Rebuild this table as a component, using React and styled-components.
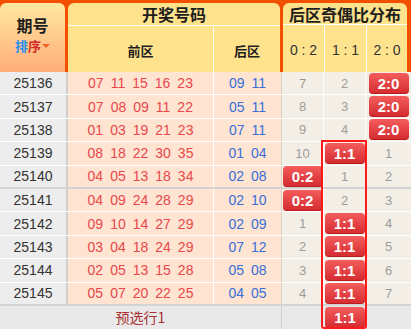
import React from 'react';
import styled, { createGlobalStyle } from 'styled-components';

const GlobalStyle = createGlobalStyle`
	body {
		margin: 0;
		background: #fff;
		font-family: 'Liberation Sans', Arial, sans-serif;
	}
`;

const CJK = `'Noto Sans CJK SC', 'Liberation Sans', sans-serif`;
const COLS = '68px 146px 68px 42px 42px 45px';

const Board = styled.div`
	width: 411px;
`;

const Head = styled.div`
	display: flex;
	gap: 3px;
	height: 72px;
	box-sizing: border-box;
	padding: 3px 4px 0 0;
	background: #f24f00;
`;

const HeadBlock = styled.div`
	width: ${(p) => p.$w}px;
	border-radius: 6px 6px 0 0;
	overflow: hidden;
	display: flex;
	flex-direction: column;
	background: #ffe28c;
`;

const PeriodHead = styled(HeadBlock)`
	background: linear-gradient(#ffe8a0, #ffad7a);
	align-items: center;
	justify-content: center;
	font-family: ${CJK};
	font-weight: 700;
	padding-bottom: 6px;
	box-sizing: border-box;
`;

const PeriodTitle = styled.div`
	font-size: 16px;
	line-height: 20px;
	color: #1e1e1e;
`;

const Sort = styled.div`
	display: flex;
	align-items: center;
	font-size: 13px;
	line-height: 17px;
	margin-top: 2px;
`;

const SortChar = styled.span`
	color: ${(p) => p.$color};
`;

const Caret = styled.span`
	margin-left: 1px;
	border-left: 4px solid transparent;
	border-right: 4px solid transparent;
	border-top: 4px solid #f2632a;
`;

const BlockTitle = styled.div`
	height: ${(p) => p.$h}px;
	border-bottom: 1px solid #fff;
	display: flex;
	align-items: center;
	justify-content: center;
	font-family: ${CJK};
	font-weight: 700;
	font-size: 16px;
	color: #1e1e1e;
`;

const SubRow = styled.div`
	flex: 1;
	display: flex;
`;

const SubCell = styled.div`
	width: ${(p) => (p.$w ? `${p.$w}px` : 'auto')};
	flex: ${(p) => (p.$w ? 'none' : 1)};
	border-right: ${(p) => (p.$last ? 'none' : '1px solid #fff')};
	display: flex;
	align-items: center;
	justify-content: center;
	font-family: ${(p) => (p.$mono ? `'Liberation Sans', Arial, sans-serif` : CJK)};
	font-weight: ${(p) => (p.$mono ? 400 : 700)};
	font-size: ${(p) => (p.$mono ? 14 : 13)}px;
	color: ${(p) => (p.$mono ? '#333' : '#1e1e1e')};
	padding-top: 2px;
`;

const Body = styled.div`
	position: relative;
`;

const Row = styled.div`
	display: grid;
	grid-template-columns: ${COLS};
	height: 23.4px;
	box-sizing: border-box;
	border-bottom: ${(p) => (p.$groupEnd ? '2px solid #d3d3d3' : '1px solid #fff')};
`;

const Cell = styled.div`
	display: flex;
	align-items: center;
	justify-content: center;
	min-width: 0;
	box-sizing: border-box;
`;

const PeriodCell = styled(Cell)`
	background: #ededed;
	border-right: 2px solid #cfcfcf;
	color: #333;
	font-size: 14px;
`;

const BallCell = styled(Cell)`
	gap: 7px;
	background: #fee4d1;
	border-right: 1px solid ${(p) => p.$edge};
	color: ${(p) => p.$color};
	font-size: 14px;
`;

const DistCell = styled(Cell)`
	background: ${(p) => p.$bg || '#f4efe6'};
	border-right: ${(p) => (p.$last || p.$bg ? 'none' : '1px solid #fff')};
	color: #9c9c9c;
	font-size: 13px;
`;

const Badge = styled.span`
	width: 40px;
	height: 21px;
	flex: none;
	border-radius: 4px;
	background: linear-gradient(#f45d5d, #d42a2e);
	box-shadow: inset 0 -1px 0 rgba(140, 0, 0, 0.35);
	color: #fff;
	font-weight: 700;
	font-size: 15px;
	display: flex;
	align-items: center;
	justify-content: center;
`;

const FootRow = styled(Row)`
	height: 23px;
	border-bottom: none;
`;

const FootLabel = styled(Cell)`
	grid-column: 1 / 4;
	background: #e9e9e9;
	border-right: 1px solid #cfcfcf;
	font-family: ${CJK};
	font-size: 14px;
	color: #a83030;
`;

const Track = styled.div`
	position: absolute;
	left: 321px;
	top: 68px;
	bottom: 0;
	width: 46px;
	box-sizing: border-box;
	border: 2px solid #ff1a1a;
	border-radius: 0 0 3px 3px;
	pointer-events: none;
`;

const rows = [
	['25136', ['07', '11', '15', '16', '23'], ['09', '11'], [7, 2, '2:0']],
	['25137', ['07', '08', '09', '11', '22'], ['05', '11'], [8, 3, '2:0']],
	['25138', ['01', '03', '19', '21', '23'], ['07', '11'], [9, 4, '2:0']],
	['25139', ['08', '18', '22', '30', '35'], ['01', '04'], [10, '1:1', 1]],
	['25140', ['04', '05', '13', '18', '34'], ['02', '08'], ['0:2', 1, 2]],
	['25141', ['04', '09', '24', '28', '29'], ['02', '10'], ['0:2', 2, 3]],
	['25142', ['09', '10', '14', '27', '29'], ['02', '09'], [1, '1:1', 4]],
	['25143', ['03', '04', '18', '24', '29'], ['07', '12'], [2, '1:1', 5]],
	['25144', ['02', '05', '13', '15', '28'], ['05', '08'], [3, '1:1', 6]],
	['25145', ['05', '07', '20', '22', '25'], ['04', '05'], [4, '1:1', 7]],
];

function Dist({ value, last, bg }) {
	return (
		<DistCell $last={last} $bg={bg}>
			{typeof value === 'string' && value ? <Badge>{value}</Badge> : value}
		</DistCell>
	);
}

export default function App() {
	return (
		<>
			<GlobalStyle />
			<Board>
				<Head>
					<PeriodHead $w={65}>
						<PeriodTitle>期号</PeriodTitle>
						<Sort>
							<SortChar $color='#2a8ff0'>排</SortChar>
							<SortChar $color='#d42a2a'>序</SortChar>
							<Caret />
						</Sort>
					</PeriodHead>
					<HeadBlock $w={212}>
						<BlockTitle $h={22}>开奖号码</BlockTitle>
						<SubRow>
							<SubCell $w={145}>前区</SubCell>
							<SubCell $last>后区</SubCell>
						</SubRow>
					</HeadBlock>
					<HeadBlock $w={124}>
						<BlockTitle $h={21}>后区奇偶比分布</BlockTitle>
						<SubRow>
							<SubCell $w={41} $mono>0 : 2</SubCell>
							<SubCell $w={41} $mono>1 : 1</SubCell>
							<SubCell $mono $last>2 : 0</SubCell>
						</SubRow>
					</HeadBlock>
				</Head>
				<Body>
					{rows.map(([period, front, back, dist], i) => (
						<Row key={period} $groupEnd={i % 5 === 4}>
							<PeriodCell>{period}</PeriodCell>
							<BallCell $color='#e8474c' $edge='#fff'>
								{front.map((n, k) => (
									<span key={k}>{n}</span>
								))}
							</BallCell>
							<BallCell $color='#3b6fd8' $edge='#d8cfc7'>
								{back.map((n, k) => (
									<span key={k}>{n}</span>
								))}
							</BallCell>
							{dist.map((v, k) => (
								<Dist key={k} value={v} last={k === 2} />
							))}
						</Row>
					))}
					<FootRow>
						<FootLabel>预选行1</FootLabel>
						<Dist value={null} bg='#e9e9e9' />
						<Dist value='1:1' bg='#e9e9e9' />
						<Dist value={null} bg='#e9e9e9' last />
					</FootRow>
					<Track />
				</Body>
			</Board>
		</>
	);
}
